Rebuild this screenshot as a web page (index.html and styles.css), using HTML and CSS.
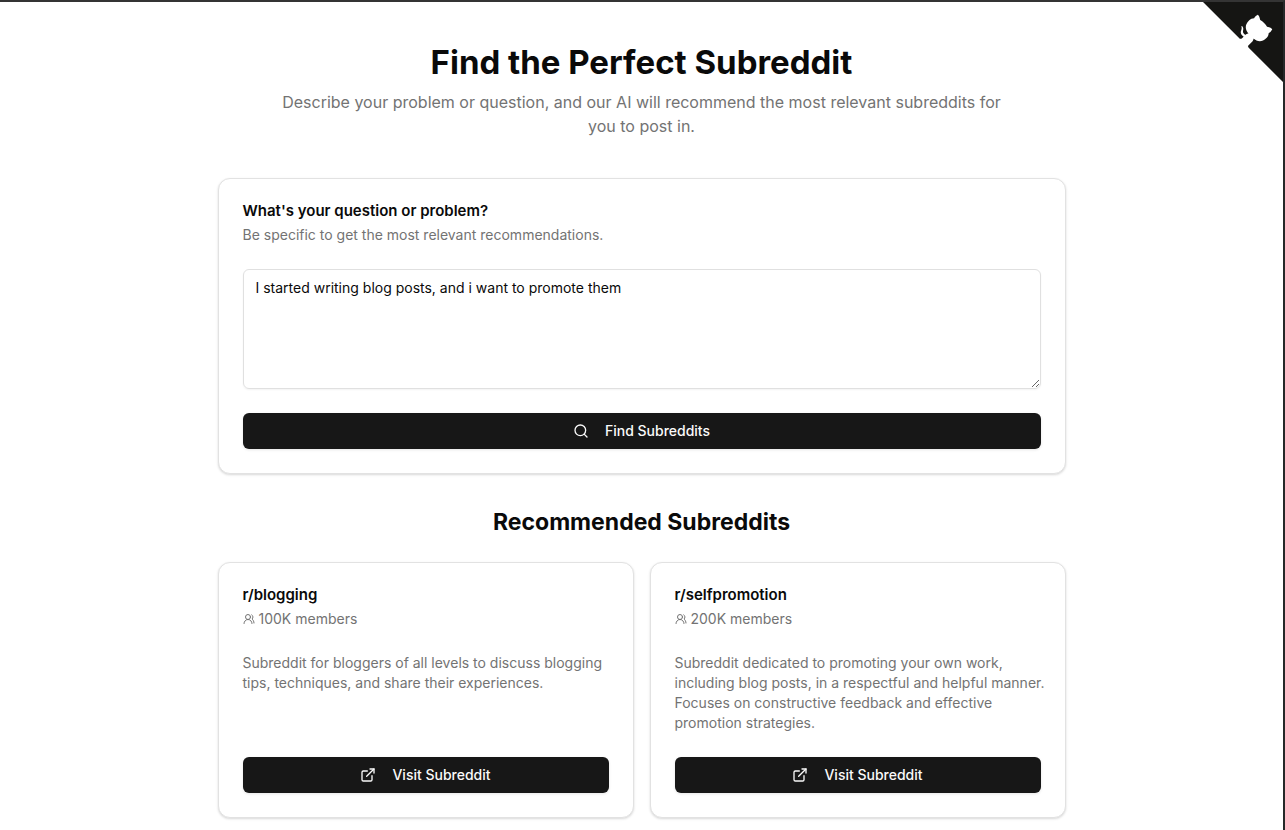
FILE: index.html
```html
<!DOCTYPE html>
<html lang="en">
<head>
<meta charset="utf-8">
<meta name="viewport" content="width=device-width, initial-scale=1">
<title>Find the Perfect Subreddit</title>
<link rel="stylesheet" href="styles.css">
</head>
<body>
<a class="github-corner" href="#" aria-label="View source on GitHub">
  <svg viewBox="0 0 250 250" aria-hidden="true">
    <path fill="#151513" d="M0,0 L115,115 L130,115 L142,142 L250,250 L250,0 Z"/>
    <path fill="#fff" d="M128.3,109.0 C113.8,99.7 119.0,89.6 119.0,89.6 C122.0,82.7 120.5,78.6 120.5,78.6 C119.2,72.0 123.4,76.3 123.4,76.3 C127.3,80.9 125.5,87.3 125.5,87.3 C122.9,97.6 130.6,101.9 134.4,103.2"/>
    <path fill="#fff" d="M115.0,115.0 C114.9,115.1 118.7,116.5 119.8,115.4 L133.7,101.6 C136.9,99.2 139.9,98.4 142.2,98.6 C133.8,88.0 127.5,74.4 143.8,58.0 C148.5,53.4 154.0,51.2 159.7,51.0 C160.3,49.4 163.2,43.6 171.4,40.1 C171.4,40.1 176.1,42.5 178.8,56.2 C183.1,58.6 187.2,61.8 190.9,65.4 C194.5,69.0 197.7,73.2 200.1,77.6 C213.8,80.2 216.3,84.9 216.3,84.9 C212.7,93.1 206.9,96.0 205.4,96.6 C205.1,102.4 203.0,107.8 198.3,112.5 C181.9,128.9 168.3,122.5 157.7,114.1 C157.9,116.9 156.7,120.9 152.7,124.9 L141.0,136.5 C139.8,137.7 141.6,141.9 141.8,141.8 Z"/>
  </svg>
</a>
<main class="page">
  <header class="hero">
    <h1 class="hero-title">Find the Perfect Subreddit</h1>
    <p class="hero-text">Describe your problem or question, and our AI will recommend the most relevant subreddits for you to post in.</p>
  </header>

  <form class="card">
    <div class="card-header">
      <label class="card-title" for="question">What's your question or problem?</label>
      <p class="card-note">Be specific to get the most relevant recommendations.</p>
    </div>
    <textarea class="question" id="question" spellcheck="false">I started writing blog posts, and i want to promote them</textarea>
    <button class="button" type="button">
      <svg class="icon" viewBox="0 0 24 24" aria-hidden="true"><circle cx="11" cy="11" r="8"/><path d="m21 21-4.3-4.3"/></svg>
      Find Subreddits
    </button>
  </form>

  <section class="results">
    <h2 class="results-title">Recommended Subreddits</h2>
    <div class="results-grid">
      <article class="card">
        <div class="card-header">
          <h3 class="card-title">r/blogging</h3>
          <p class="card-note members">
            <svg class="icon icon-small" viewBox="0 0 24 24" aria-hidden="true"><path d="M18 21a8 8 0 0 0-16 0"/><circle cx="10" cy="8" r="5"/><path d="M22 20c0-3.37-2-6.5-4-8a5 5 0 0 0-.45-8.3"/></svg>
            100K members
          </p>
        </div>
        <p class="description">Subreddit for bloggers of all levels to discuss blogging tips, techniques, and share their experiences.</p>
        <a class="button" href="#">
          <svg class="icon" viewBox="0 0 24 24" aria-hidden="true"><path d="M15 3h6v6"/><path d="M10 14 21 3"/><path d="M18 13v6a2 2 0 0 1-2 2H5a2 2 0 0 1-2-2V8a2 2 0 0 1 2-2h6"/></svg>
          Visit Subreddit
        </a>
      </article>
      <article class="card">
        <div class="card-header">
          <h3 class="card-title">r/selfpromotion</h3>
          <p class="card-note members">
            <svg class="icon icon-small" viewBox="0 0 24 24" aria-hidden="true"><path d="M18 21a8 8 0 0 0-16 0"/><circle cx="10" cy="8" r="5"/><path d="M22 20c0-3.37-2-6.5-4-8a5 5 0 0 0-.45-8.3"/></svg>
            200K members
          </p>
        </div>
        <p class="description">Subreddit dedicated to promoting your own work, including blog posts, in a respectful and helpful manner. Focuses on constructive feedback and effective promotion strategies.</p>
        <a class="button" href="#">
          <svg class="icon" viewBox="0 0 24 24" aria-hidden="true"><path d="M15 3h6v6"/><path d="M10 14 21 3"/><path d="M18 13v6a2 2 0 0 1-2 2H5a2 2 0 0 1-2-2V8a2 2 0 0 1 2-2h6"/></svg>
          Visit Subreddit
        </a>
      </article>
    </div>
  </section>
</main>
</body>
</html>
```
FILE: styles.css
```css
*, *::before, *::after { box-sizing: border-box; }

body {
  position: relative;
  min-height: 100vh;
  margin: 0;
  border-top: 2px solid #343434;
  border-right: 2px solid #262829;
  background: #fff;
  color: #0a0a0a;
  font-family: Inter, "Liberation Sans", sans-serif;
  font-size: 14px;
  line-height: 20px;
}

h1, h2, h3, p { margin: 0; }

.github-corner {
  position: absolute;
  top: 0;
  right: 0;
}
.github-corner svg { display: block; width: 80px; height: 80px; }

.page {
  max-width: 896px;
  margin: 0 auto;
  padding: 40px 24px 12px;
}

.hero { margin-bottom: 40px; text-align: center; }
.hero-title { font-size: 33px; font-weight: 700; line-height: 40px; }
.hero-text {
  max-width: 728px;
  margin: 8px auto 0;
  color: #737373;
  font-size: 16px;
  line-height: 24px;
}

.card {
  display: flex;
  flex-direction: column;
  gap: 24px;
  padding: 24px;
  border: 1px solid #e2e2e2;
  border-radius: 12px;
  background: #fff;
  box-shadow: 0 1px 3px rgba(0, 0, 0, 0.1), 0 1px 2px rgba(0, 0, 0, 0.06);
}
.card-header { display: flex; flex-direction: column; gap: 6px; }
.card-title { font-size: 15px; font-weight: 600; line-height: 16px; }
.card-note, .description { color: #737373; }
.members { display: flex; align-items: center; gap: 4px; }
.description { flex: 1; margin-right: -8px; }

.question {
  display: block;
  width: 100%;
  height: 120px;
  padding: 8px 12px;
  border: 1px solid #e0e0e0;
  border-radius: 6px;
  outline: none;
  background: transparent;
  box-shadow: 0 1px 2px rgba(0, 0, 0, 0.05);
  color: inherit;
  font: inherit;
  resize: vertical;
}

.button {
  display: flex;
  align-items: center;
  justify-content: center;
  gap: 16px;
  width: 100%;
  height: 36px;
  padding: 8px 16px;
  border: 0;
  border-radius: 6px;
  background: #171717;
  box-shadow: 0 1px 3px rgba(0, 0, 0, 0.1);
  color: #fafafa;
  font: inherit;
  font-weight: 500;
  text-decoration: none;
  cursor: pointer;
}

.icon {
  flex: none;
  width: 16px;
  height: 16px;
  fill: none;
  stroke: currentColor;
  stroke-width: 2;
  stroke-linecap: round;
  stroke-linejoin: round;
}
.icon-small { width: 12px; height: 12px; }

.results { margin-top: 32px; }
.results-title {
  margin-bottom: 24px;
  font-size: 23px;
  font-weight: 700;
  line-height: 32px;
  text-align: center;
}
.results-grid {
  display: grid;
  grid-template-columns: repeat(auto-fit, minmax(320px, 1fr));
  gap: 16px;
}
```
